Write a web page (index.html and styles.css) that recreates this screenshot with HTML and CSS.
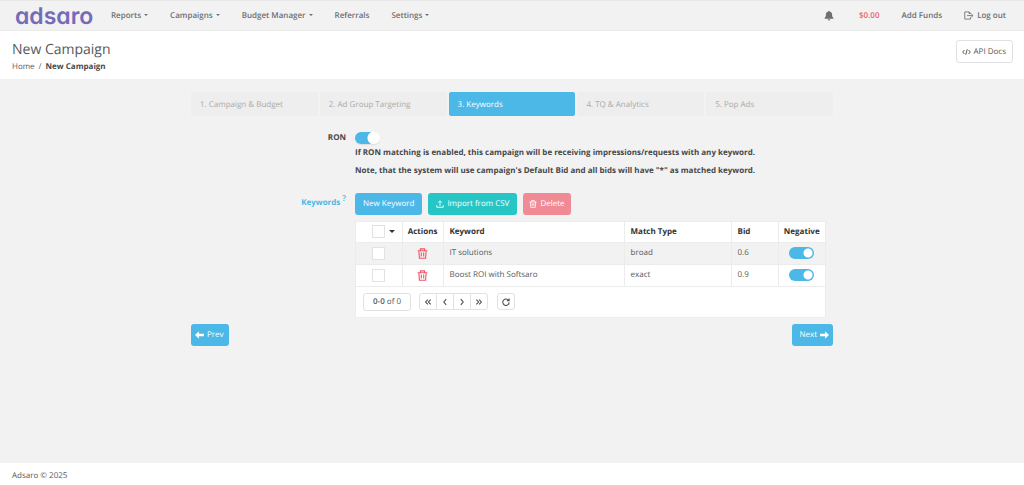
FILE: index.html
```html
<!DOCTYPE html>
<html lang="en">
<head>
<meta charset="utf-8">
<title>New Campaign</title>
<link rel="stylesheet" href="styles.css">
</head>
<body>
<svg class="defs" aria-hidden="true">
  <symbol id="trash" viewBox="0 0 16 16"><path d="M1 4h14M5 3.600V1.200h6v2.400M2.700 4l.8 10.800h9L13.300 4M6.300 6.500v5.800M9.700 6.500v5.800" fill="none" stroke="currentColor" stroke-width="1.600"/></symbol>
  <symbol id="left2" viewBox="0 0 10 10"><path d="M4.800 2 2 5l2.800 3M8.300 2 5.500 5l2.800 3"/></symbol>
  <symbol id="left1" viewBox="0 0 10 10"><path d="M6.500 1.500 3.500 5l3 3.500"/></symbol>
  <symbol id="right1" viewBox="0 0 10 10"><path d="M3.500 1.500 6.500 5l-3 3.500"/></symbol>
  <symbol id="right2" viewBox="0 0 10 10"><path d="M1.700 2 4.500 5 1.700 8M5.200 2 8 5 5.200 8"/></symbol>
</svg>

<header class="topbar">
  <a class="logo" href="#">adsaro</a>
  <nav class="menu">
    <a class="drop" href="#">Reports</a>
    <a class="drop" href="#">Campaigns</a>
    <a class="drop" href="#">Budget Manager</a>
    <a href="#">Referrals</a>
    <a class="drop" href="#">Settings</a>
  </nav>
  <div class="account">
    <a href="#" aria-label="Notifications"><svg class="bell" viewBox="0 0 16 16"><path d="M8 0.500c.7 0 1 .5 1 1.100 2.600.5 3.900 2.400 3.900 4.900 0 3 .9 4.300 2.100 5.500v1H1v-1c1.200-1.200 2.100-2.500 2.100-5.500C3.100 4 4.400 2.100 7 1.600 7 1 7.300.5 8 .5zM6 14h4a2 2 0 0 1-4 0z" fill="currentColor"/></svg></a>
    <a class="balance" href="#">$0.00</a>
    <a href="#">Add Funds</a>
    <a class="logout" href="#"><svg class="exit" viewBox="0 0 20 16"><path d="M13 5V3.500L10.500.8H1.500v14.400H13V11.500M6 8.200h11.500M14.500 5l3.500 3.200-3.500 3.200M10 1v3h3" fill="none" stroke="currentColor" stroke-width="1.700"/></svg>Log out</a>
  </div>
</header>

<section class="heading">
  <div>
    <h1>New Campaign</h1>
    <nav class="crumbs"><a href="#">Home</a><span>/</span><strong>New Campaign</strong></nav>
  </div>
  <a class="docs" href="#"><svg class="code" viewBox="0 0 18 14"><path d="M5 3 1.300 7 5 11M13 3l3.700 4L13 11M10.500 1.500l-3 11" fill="none" stroke="currentColor" stroke-width="2"/></svg>API Docs</a>
</section>

<main class="content">
  <ol class="steps">
    <li>1. Campaign &amp; Budget</li>
    <li>2. Ad Group Targeting</li>
    <li class="current" aria-current="step">3. Keywords</li>
    <li>4. TQ &amp; Analytics</li>
    <li>5. Pop Ads</li>
  </ol>

  <div class="field">
    <label class="name" for="ron">RON</label>
    <div>
      <input class="switch" id="ron" type="checkbox" role="switch" checked>
      <p class="note">If RON matching is enabled, this campaign will be receiving impressions/requests with any keyword.</p>
      <p class="note">Note, that the system will use campaign's Default Bid and all bids will have "*" as matched keyword.</p>
    </div>
  </div>

  <div class="field keywords">
    <div class="name help">Keywords <sup>?</sup></div>
    <div>
      <div class="actions">
        <button class="btn" type="button">New Keyword</button>
        <button class="btn teal" type="button"><svg class="icon" viewBox="0 0 16 16"><path d="M1.500 10.500v4h13v-4M8 11.500V2M4.500 5 8 1.500 11.500 5" fill="none" stroke="currentColor" stroke-width="1.800"/></svg>Import from CSV</button>
        <button class="btn red" type="button"><svg class="icon"><use href="#trash"/></svg>Delete</button>
      </div>
      <div class="panel">
        <table>
          <colgroup><col class="c-pick"><col class="c-act"><col><col class="c-match"><col class="c-bid"><col class="c-neg"></colgroup>
          <thead>
            <tr>
              <th><span class="all"><input class="tick" type="checkbox" aria-label="Select all"><i class="caret"></i></span></th>
              <th class="mid">Actions</th><th>Keyword</th><th>Match Type</th><th>Bid</th><th class="mid">Negative</th>
            </tr>
          </thead>
          <tbody>
            <tr>
              <td class="pick"><input class="tick" type="checkbox" aria-label="Select IT solutions"></td>
              <td class="mid"><button class="del" type="button" aria-label="Delete IT solutions"><svg class="bin"><use href="#trash"/></svg></button></td>
              <td>IT solutions</td><td>broad</td><td>0.6</td>
              <td class="mid"><input class="switch inset" type="checkbox" role="switch" checked aria-label="Negative"></td>
            </tr>
            <tr>
              <td class="pick"><input class="tick" type="checkbox" aria-label="Select Boost ROI with Softsaro"></td>
              <td class="mid"><button class="del" type="button" aria-label="Delete Boost ROI with Softsaro"><svg class="bin"><use href="#trash"/></svg></button></td>
              <td>Boost ROI with Softsaro</td><td>exact</td><td>0.9</td>
              <td class="mid"><input class="switch inset" type="checkbox" role="switch" checked aria-label="Negative"></td>
            </tr>
          </tbody>
        </table>
        <div class="pager">
          <span class="range"><b>0-0</b> of <b class="total">0</b></span>
          <div class="pages">
            <button type="button" aria-label="First page"><svg><use href="#left2"/></svg></button>
            <button type="button" aria-label="Previous page"><svg><use href="#left1"/></svg></button>
            <button type="button" aria-label="Next page"><svg><use href="#right1"/></svg></button>
            <button type="button" aria-label="Last page"><svg><use href="#right2"/></svg></button>
          </div>
          <button class="reload" type="button" aria-label="Reload"><svg viewBox="0 0 10 10"><path d="M8.300 3A4 4 0 1 0 9 5.500M8.900.5v3H6"/></svg></button>
        </div>
      </div>
    </div>
  </div>

  <div class="wizard">
    <button class="btn" type="button"><svg class="arrow" viewBox="0 0 16 14"><path d="M0 7l7-6.500v4.200h9v4.600H7v4.200z" fill="currentColor"/></svg>Prev</button>
    <button class="btn" type="button">Next<svg class="arrow" viewBox="0 0 16 14"><path d="M16 7 9 .5v4.200H0v4.600h9v4.200z" fill="currentColor"/></svg></button>
  </div>
</main>

<footer class="foot">Adsaro © 2025</footer>
</body>
</html>
```
FILE: styles.css
```css
* { box-sizing: border-box; }
body {
  margin: 0;
  min-height: 100vh;
  display: flex;
  flex-direction: column;
  background: #f2f2f2;
  color: #55595c;
  font: 8px/12px "Open Sans", sans-serif;
  text-rendering: geometricPrecision;
}
a { color: inherit; text-decoration: none; }
button, input { font: inherit; margin: 0; text-rendering: inherit; }
.defs { position: absolute; width: 0; height: 0; }

.topbar {
  display: flex;
  align-items: center;
  height: 31px;
  padding: 0 18px 0 15px;
  border-top: 1px solid #e7e7e7;
  border-bottom: 1px solid #ebebeb;
  color: #6b6f73;
  font-weight: 600;
}
.logo {
  width: 96px;
  color: #746cb8;
  font: 600 23px/28px Inter, sans-serif;
  font-feature-settings: "cv11";
}
.menu { display: flex; gap: 22px; }
.drop::after, .caret {
  content: "";
  display: inline-block;
  border: 2px solid transparent;
  border-top-color: currentColor;
  border-bottom: 0;
  margin-left: 3px;
  vertical-align: 2px;
}
.account { display: flex; align-items: center; gap: 22px; margin-left: auto; }
.account a { display: flex; align-items: center; }
.bell { width: 10px; height: 11px; margin-right: 3px; }
.balance { color: #f0606e; }
.exit { width: 10px; height: 9px; margin-right: 3px; }

.heading {
  display: flex;
  justify-content: space-between;
  align-items: flex-start;
  height: 48px;
  padding: 9px 11px 0 12px;
  background: #fff;
}
h1 { margin: 0 0 1px; font-size: 14px; line-height: 20px; font-weight: 400; }
.crumbs { display: flex; gap: 4px; }
.crumbs strong { color: #45484b; }
.docs {
  display: flex;
  align-items: center;
  gap: 3px;
  height: 23px;
  padding: 0 6px 0 5px;
  border: 1px solid #dfe1e4;
  border-radius: 3px;
}
.code { width: 9px; height: 8px; }

.content { flex: 1; width: 100%; max-width: 642px; margin: 0 auto; padding-top: 13px; }
.steps { display: flex; gap: 2px; margin: 0 0 16px; padding: 0; list-style: none; }
.steps li { flex: 1; padding: 7px 9px 5px; background: #eee; color: #aaa; border-radius: 2px; }
.steps .current { background: #4bb8e7; color: #fff; }

.field { display: grid; grid-template-columns: 155px 1fr; gap: 9px; padding-right: 7px; }
.name { text-align: right; font-weight: 700; color: #45484b; }
.note { margin: 3px 0 6px; font-weight: 700; color: #45484b; }
.keywords { margin-top: 10px; }
.name.help { padding-top: 4px; color: #4bb8e7; }
.help sup { line-height: 0; font-size: 8px; font-weight: 600; vertical-align: 4px; }

.switch {
  appearance: none;
  display: block;
  width: 25px;
  height: 12px;
  border-radius: 6px;
  background: radial-gradient(circle at 19px 6px, #fff 6px, #4bb8e7 7px);
  box-shadow: 0 1px 1px #ddd;
}
.switch.inset {
  margin: 0 auto;
  background: radial-gradient(circle at 19px 6px, #fff 4px, #4bb8e7 5px);
  box-shadow: none;
}

.actions { display: flex; gap: 6px; margin-bottom: 6px; }
.btn {
  display: flex;
  align-items: center;
  gap: 3px;
  height: 22px;
  padding: 0 8px;
  border: 0;
  border-radius: 3px;
  background: #4bb8e7;
  color: #fff;
}
.teal { background: #26c6c6; }
.red { background: #f08b96; padding: 0 6px; }
.icon { width: 8px; height: 8px; }

.panel { background: #fff; border: 1px solid #ececec; }
table { width: 100%; table-layout: fixed; border-collapse: collapse; }
.c-pick { width: 46px; }
.c-act { width: 41px; }
.c-match { width: 107px; }
.c-bid { width: 47px; }
.c-neg { width: 47px; }
th, td {
  height: 22px;
  padding: 0 6px;
  border-right: 1px solid #ececec;
  border-bottom: 1px solid #ececec;
  text-align: left;
}
th:last-child, td:last-child { border-right: 0; }
th { height: 20px; color: #2f3234; }
th.mid, td.mid { padding: 0; text-align: center; }
tbody tr:first-child { background: #f2f2f2; }
td.pick { padding: 0 16px; }
.all { display: flex; align-items: center; gap: 4px; margin-left: 10px; }
.all .caret { margin: 0; border-width: 3px 3px 0; }
.tick {
  appearance: none;
  display: block;
  flex: none;
  width: 13px;
  height: 13px;
  border: 1px solid #dfe3e6;
  background: #fff;
}
.del { display: block; margin: 0 auto; padding: 0; border: 0; background: none; color: #ee5565; }
.bin { display: block; width: 11px; height: 11px; }

.pager { display: flex; align-items: center; padding: 6px 7px; }
.range { padding: 2px 9px; border: 1px solid #dfe3e6; border-radius: 3px; }
.range b { font-weight: 600; }
.range .total { font-weight: 400; }
.pages { display: flex; margin: 0 9px 0 8px; }
.pages button, .reload {
  display: grid;
  place-items: center;
  width: 18px;
  height: 17px;
  padding: 0;
  border: 1px solid #dfe3e6;
  background: #fff;
  color: #45484b;
}
.pages button + button { margin-left: -1px; }
.pages button:first-child { border-radius: 3px 0 0 3px; }
.pages button:last-child { border-radius: 0 3px 3px 0; }
.reload { border-radius: 3px; }
.pager svg { width: 8px; height: 8px; fill: none; stroke: currentColor; stroke-width: 1.3; }

.wizard { display: flex; justify-content: space-between; margin-top: 6px; }
.wizard .btn { padding: 0 5px 0 4px; }
.wizard .btn:last-child { padding: 0 4px 0 7px; }
.arrow { width: 9px; height: 8px; }

.foot { padding: 7px 12px 3px; background: #fff; }
```
